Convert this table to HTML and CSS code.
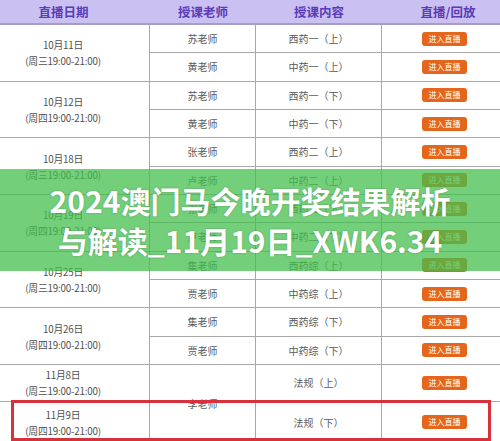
FILE: index.html
```html
<!DOCTYPE html>
<html lang="zh">
<head>
<meta charset="utf-8">
<link rel="stylesheet" href="styles.css">
</head>
<body>
<div class="page">
  <div class="schedule">
    <div class="th">直播日期</div>
    <div class="th">授课老师</div>
    <div class="th">授课内容</div>
    <div class="th">直播/回放</div>

    <div class="date span2">10月11日<br>(周三19:00-21:00)</div>
    <div class="cell">苏老师</div><div class="cell">西药一（上）</div><div class="cell btn-cell"><span class="btn">进入直播</span></div>
    <div class="cell">黄老师</div><div class="cell">中药一（上）</div><div class="cell btn-cell"><span class="btn">进入直播</span></div>

    <div class="date span2">10月12日<br>(周四19:00-21:00)</div>
    <div class="cell">苏老师</div><div class="cell">西药一（下）</div><div class="cell btn-cell"><span class="btn">进入直播</span></div>
    <div class="cell">黄老师</div><div class="cell">中药一（下）</div><div class="cell btn-cell"><span class="btn">进入直播</span></div>

    <div class="date span2">10月18日<br>(周三19:00-21:00)</div>
    <div class="cell">张老师</div><div class="cell">西药二（上）</div><div class="cell btn-cell"><span class="btn">进入直播</span></div>
    <div class="cell">卢老师</div><div class="cell">中药二（上）</div><div class="cell btn-cell"><span class="btn">进入直播</span></div>

    <div class="date span2">10月19日<br>(周四19:00-21:00)</div>
    <div class="cell">张老师</div><div class="cell">西药二（下）</div><div class="cell btn-cell"><span class="btn">进入直播</span></div>
    <div class="cell">卢老师</div><div class="cell">中药二（下）</div><div class="cell btn-cell"><span class="btn">进入直播</span></div>

    <div class="date span2">10月25日<br>(周三19:00-21:00)</div>
    <div class="cell">集老师</div><div class="cell">西药综（上）</div><div class="cell btn-cell"><span class="btn">进入直播</span></div>
    <div class="cell">贾老师</div><div class="cell">中药综（上）</div><div class="cell btn-cell"><span class="btn">进入直播</span></div>

    <div class="date span2">10月26日<br>(周四19:00-21:00)</div>
    <div class="cell">集老师</div><div class="cell">西药综（下）</div><div class="cell btn-cell"><span class="btn">进入直播</span></div>
    <div class="cell">贾老师</div><div class="cell">中药综（下）</div><div class="cell btn-cell"><span class="btn">进入直播</span></div>

    <div class="date">11月8日<br>(周三19:00-21:00)</div>
    <div class="cell span2">李老师</div><div class="cell">法规（上）</div><div class="cell btn-cell"><span class="btn">进入直播</span></div>
    <div class="date">11月9日<br>(周四19:00-21:00)</div>
    <div class="cell">法规（下）</div><div class="cell btn-cell"><span class="btn">进入直播</span></div>
  </div>

  <div class="highlight"></div>

  <div class="banner">
    <h1 class="banner-title">2024澳门马今晚开奖结果解析<br>与解读_11月19日_XWK6.34</h1>
  </div>
</div>
</body>
</html>
```

FILE: styles.css
```css
* { box-sizing: border-box; }
html, body {
  margin: 0;
  padding: 0;
  background: #ffffff;
}
body {
  width: 500px;
  height: 441px;
  overflow: hidden;
  font-family: "Noto Sans CJK SC", "Noto Sans", sans-serif;
}
.page {
  position: relative;
  width: 500px;
  height: 441px;
  overflow: hidden;
}
/* the table is wider than the crop: its left and right edges are cut off */
.schedule {
  display: grid;
  grid-template-columns: 173px 106px 126px 132px;
  grid-template-rows: 25px repeat(12, 28.33px) 37px 42px;
  width: 537px;
  margin-left: -23px;
}
.th {
  background: #cbc0f2;
  border-bottom: 2px solid #a49ec4;
  color: #5a3bb8;
  font-weight: 700;
  font-size: 12.5px;
  display: flex;
  align-items: center;
  justify-content: center;
  padding-bottom: 1px;
}
.date, .cell {
  display: flex;
  align-items: center;
  justify-content: center;
  text-align: center;
  border-right: 1px solid #a8a8a8;
  border-bottom: 1px solid #a8a8a8;
  color: #5a5a5a;
  font-size: 10px;
}
.date {
  font-size: 9.8px;
  letter-spacing: -0.2px;
  line-height: 16px;
  color: #505050;
  padding-top: 1px;
}
.span2 { grid-row: span 2; }
.btn-cell {
  border-right: none;
  padding-right: 7px;
}
.btn {
  display: inline-flex;
  align-items: center;
  justify-content: center;
  width: 45px;
  height: 14px;
  border-radius: 3px;
  background: #e4661c;
  color: #ffffff;
  font-size: 8px;
  line-height: 1;
}
.highlight {
  position: absolute;
  left: 11px;
  top: 400px;
  width: 480px;
  height: 41px;
  border: 3px solid #d6323c;
}
.banner {
  position: absolute;
  left: 0;
  top: 169px;
  width: 500px;
  height: 102px;
  background: rgba(66, 190, 75, 0.74);
  display: flex;
  align-items: center;
  justify-content: center;
}
.banner-title {
  margin: 0;
  color: #ffffff;
  font-size: 30px;
  font-weight: 700;
  line-height: 40px;
  text-align: center;
  text-shadow: 0 0 2px rgba(0, 0, 0, 0.25);
}
```
